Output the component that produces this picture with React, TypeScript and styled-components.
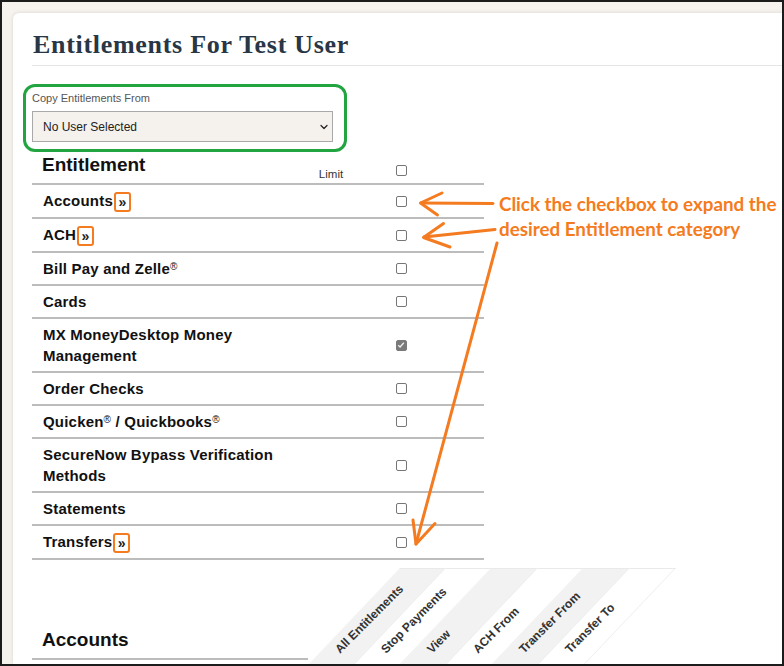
import React from 'react';
import styled, { createGlobalStyle } from 'styled-components';

const GlobalStyle = createGlobalStyle`
  html, body { margin: 0; padding: 0; background: #ffffff; }
  body { font-family: "Liberation Sans", Arial, sans-serif; }
  *, *::before, *::after { box-sizing: border-box; }
`;

const ORANGE = '#f47b20';

const Frame = styled.div`
  position: relative;
  width: 784px;
  height: 666px;
  border: 2px solid #1c1c1c;
  background: #f6f2ee;
  overflow: hidden;
  display: flex;
  padding: 11px 0 0 11px;
`;

const Card = styled.div`
  flex: 1;
  min-width: 0;
  background: #ffffff;
  border-top-left-radius: 6px;
  box-shadow: 0 0 4px rgba(0, 0, 0, 0.12);
  padding: 17px 0 0 19px;
  display: flex;
  flex-direction: column;
  align-items: flex-start;
`;

const Title = styled.h1`
  align-self: stretch;
  margin: 0;
  padding: 0 0 5px 1px;
  border-bottom: 1px solid #e6e6e6;
  font-family: "Liberation Serif", "DejaVu Serif", serif;
  font-weight: 700;
  font-size: 26px;
  line-height: 30px;
  letter-spacing: 0.7px;
  color: #283646;
`;

const CopyGroup = styled.div`
  width: 324px;
  margin: 18px 0 0 -9px;
  border: 3px solid #22a541;
  border-radius: 12px;
  padding: 4px 11px 7px 6px;
`;

const FieldLabel = styled.div`
  font-size: 11px;
  line-height: 14px;
  color: #555555;
  margin-bottom: 6px;
`;

const SelectBox = styled.div`
  height: 31px;
  border: 1px solid #a9a9a9;
  background: #f5f1ec;
  display: flex;
  align-items: center;
  justify-content: space-between;
  padding: 0 2px 0 10px;
  font-size: 12px;
  color: #222222;
`;

const Table = styled.div`
  width: 452px;
  display: flex;
  flex-direction: column;
`;

const Row = styled.div`
  display: grid;
  grid-template-columns: 268px 62px 78px 44px;
  align-items: center;
  border-bottom: 2px solid #bcbcbc;
`;

const HeaderRow = styled(Row)`
  height: 33px;
  align-items: stretch;
`;

const HeaderTitle = styled.div`
  padding: 2px 0 0 10px;
  font-size: 19px;
  line-height: 22px;
  font-weight: 700;
  color: #111111;
`;

const LimitLabel = styled.div`
  align-self: end;
  margin-bottom: 2px;
  text-align: center;
  font-size: 11.5px;
  line-height: 14px;
  color: #333333;
`;

const CheckCell = styled.div<{ $top?: number }>`
  display: flex;
  justify-content: center;
  align-items: ${(p) => (p.$top !== undefined ? 'flex-start' : 'center')};
  padding-top: ${(p) => (p.$top !== undefined ? `${p.$top}px` : '0')};
`;

const NameCell = styled.div`
  padding: 5px 20px 5px 11px;
  font-size: 15px;
  line-height: 21px;
  font-weight: 700;
  letter-spacing: 0.2px;
  color: #111111;
`;

const Sup = styled.span`
  font-size: 10px;
  font-weight: 400;
  vertical-align: 4px;
  line-height: 0;
`;

const Expand = styled.span`
  display: inline-block;
  margin-left: 1px;
  padding: 0 2.5px;
  border: 2px solid ${ORANGE};
  border-radius: 3px;
  font-size: 14px;
  line-height: 16px;
  vertical-align: middle;
  color: #222222;
`;

const Box = styled.span<{ $checked?: boolean }>`
  width: 11px;
  height: 11px;
  border: 1px solid ${(p) => (p.$checked ? '#7a7a7a' : '#767676')};
  border-radius: 2px;
  background: ${(p) => (p.$checked ? '#7a7a7a' : '#ffffff')};
  display: flex;
  align-items: center;
  justify-content: center;
`;

const Section = styled.div`
  margin-top: 8px;
  display: flex;
  height: 97px;
  flex-shrink: 0;
`;

const SectionName = styled.div`
  width: 276px;
  display: flex;
  align-items: flex-end;
  padding: 0 0 7px 10px;
  margin-bottom: 5px;
  border-bottom: 2px solid #bcbcbc;
  font-size: 19px;
  line-height: 22px;
  font-weight: 700;
  color: #111111;
`;

const DiagCell = styled.div`
  position: relative;
  width: 46px;
  height: 97px;
`;

const Stripe = styled.div<{ $shade: boolean }>`
  position: absolute;
  inset: 0;
  background: ${(p) => (p.$shade ? '#f2f2f2' : '#ffffff')};
  border-top: 1px solid #e9e9e9;
  border-right: 1px solid #ededed;
  transform: skewX(-43.5deg);
  transform-origin: 0 100%;
`;

const DiagLabel = styled.span`
  position: absolute;
  left: 34px;
  bottom: 9px;
  white-space: nowrap;
  font-size: 12px;
  line-height: 14px;
  font-weight: 700;
  color: #333333;
  transform: rotate(-45deg);
  transform-origin: 0 100%;
`;

const Annotations = styled.div`
  position: absolute;
  inset: -2px;
  pointer-events: none;
`;

const Callout = styled.div`
  position: absolute;
  left: 499px;
  top: 191px;
  font-family: Lato, "Open Sans", sans-serif;
  font-weight: 700;
  font-size: 18.8px;
  line-height: 25px;
  color: ${ORANGE};
  white-space: nowrap;
`;

const Checkbox: React.FC<{ checked?: boolean }> = ({ checked }) => (
  <Box $checked={checked}>
    {checked && (
      <svg width="8" height="8" viewBox="0 0 8 8">
        <path d="M1.2 4.2 L3.1 6 L6.8 1.8" stroke="#eeeeee" strokeWidth="1.3" fill="none" />
      </svg>
    )}
  </Box>
);

type Item = { label: React.ReactNode; expand?: boolean; checked?: boolean };

const items: Item[] = [
  { label: 'Accounts', expand: true },
  { label: 'ACH', expand: true },
  { label: <>Bill Pay and Zelle<Sup>®</Sup></> },
  { label: 'Cards' },
  { label: 'MX MoneyDesktop Money Management', checked: true },
  { label: 'Order Checks' },
  { label: <>Quicken<Sup>®</Sup> / Quickbooks<Sup>®</Sup></> },
  { label: 'SecureNow Bypass Verification Methods' },
  { label: 'Statements' },
  { label: 'Transfers', expand: true },
];

const diagHeaders = ['All Entitlements', 'Stop Payments', 'View', 'ACH From', 'Transfer From', 'Transfer To'];

export default function App() {
  return (
    <>
      <GlobalStyle />
      <Frame>
        <Card>
          <Title>Entitlements For Test User</Title>
          <CopyGroup>
            <FieldLabel>Copy Entitlements From</FieldLabel>
            <SelectBox>
              <span>No User Selected</span>
              <svg width="12" height="12" viewBox="0 0 24 24" fill="none" stroke="#222" strokeWidth="2.4" strokeLinecap="round" strokeLinejoin="round">
                <path d="m6 9 6 6 6-6" />
              </svg>
            </SelectBox>
          </CopyGroup>
          <Table>
            <HeaderRow>
              <HeaderTitle>Entitlement</HeaderTitle>
              <LimitLabel>Limit</LimitLabel>
              <CheckCell $top={13}>
                <Checkbox />
              </CheckCell>
              <div />
            </HeaderRow>
            {items.map((it, i) => (
              <Row key={i}>
                <NameCell>
                  {it.label}
                  {it.expand && <Expand>»</Expand>}
                </NameCell>
                <div />
                <CheckCell>
                  <Checkbox checked={it.checked} />
                </CheckCell>
                <div />
              </Row>
            ))}
          </Table>
          <Section>
            <SectionName>Accounts</SectionName>
            {diagHeaders.map((h, i) => (
              <DiagCell key={h}>
                <Stripe $shade={i % 2 === 0} />
                <DiagLabel>{h}</DiagLabel>
              </DiagCell>
            ))}
          </Section>
        </Card>
        <Annotations>
          <svg width="784" height="666" viewBox="0 0 784 666">
            <g stroke={ORANGE} strokeWidth="3" strokeLinecap="round" strokeLinejoin="round" fill="none">
              <path d="M493 203.5 L421 203" />
              <path d="M442 193 L420.5 203 L437.5 215" />
              <path d="M495 229.5 L424 237" />
              <path d="M443.5 223.5 L423.5 237.5 L450 247" />
              <path d="M497 243 L416 544" />
              <path d="M413 520 L416 544 L435 523.5" />
            </g>
          </svg>
          <Callout>
            Click the checkbox to expand the
            <br />
            desired Entitlement category
          </Callout>
        </Annotations>
      </Frame>
    </>
  );
}
